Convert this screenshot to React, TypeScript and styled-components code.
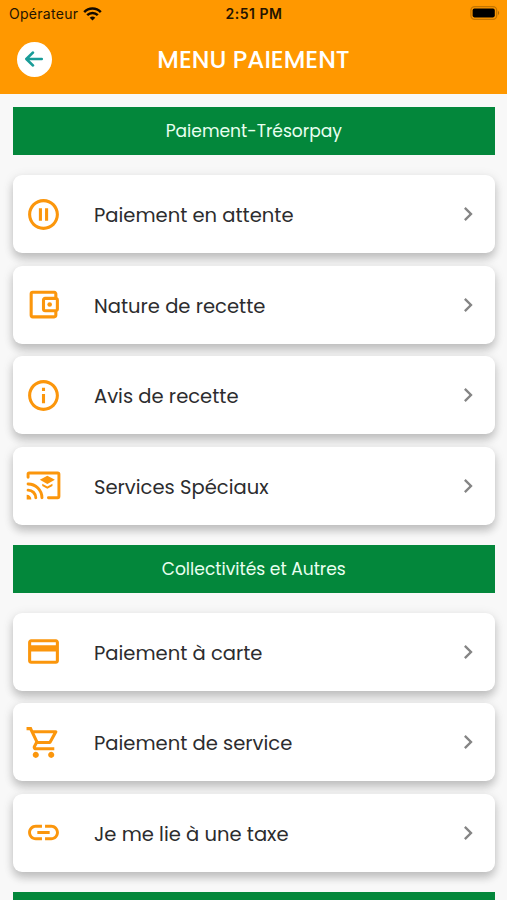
import React from 'react';
import styled, { createGlobalStyle } from 'styled-components';
import {
  MdChevronRight,
  MdInfoOutline,
  MdLink,
  MdOutlineAccountBalanceWallet,
  MdOutlineShoppingCart,
  MdPauseCircleOutline,
  MdPayment,
} from 'react-icons/md';

const GlobalStyle = createGlobalStyle`
  * { box-sizing: border-box; }
  body { margin: 0; background: #f8f8f8; }
`;

const Screen = styled.main`
  height: 900px;
  overflow: hidden;
  background: #f8f8f8;
  font-family: Poppins, Inter, sans-serif;
`;

const Header = styled.header`
  height: 93.6px;
  background: #ff9800;
`;

const StatusBar = styled.div`
  display: grid;
  grid-template-columns: 1fr auto 1fr;
  align-items: center;
  height: 27px;
  padding: 0 7px 0 9px;
  color: #241400;
  font: 400 14px Inter, sans-serif;
`;

const Carrier = styled.div`
  display: flex;
  align-items: center;
  gap: 5px;
  letter-spacing: 0.28px;
`;

const Clock = styled.div`
  margin-left: -1px;
  font-weight: 600;
  font-size: 14px;
  letter-spacing: 0.5px;
`;

const BatterySlot = styled.div`
  display: flex;
  justify-content: flex-end;
  padding-bottom: 1px;
`;

const TitleBar = styled.div`
  display: grid;
  grid-template-columns: 35px 1fr 35px;
  align-items: center;
  height: 64px;
  padding: 0 17px;
`;

const BackButton = styled.button`
  display: grid;
  place-items: center;
  width: 35px;
  height: 35px;
  padding: 0;
  border: 0;
  border-radius: 50%;
  background: #fff;
`;

const Title = styled.h1`
  margin: 0;
  padding-top: 2px;
  text-align: center;
  color: #fff;
  font-size: 24.5px;
  line-height: 36px;
  font-weight: 500;
  white-space: nowrap;
`;

const Content = styled.div`
  display: flex;
  flex-direction: column;
  gap: 20px;
  padding: 13.8px 12.5px 0 13px;
`;

const Banner = styled.h2`
  flex: none;
  height: 48px;
  margin: 0;
  background: #03873b;
  color: #e9fff0;
  text-align: center;
  font-size: 17.1px;
  line-height: 48px;
  font-weight: 400;
`;

const List = styled.div`
  display: flex;
  flex-direction: column;
  gap: 12.5px;
`;

const Card = styled.div`
  display: flex;
  align-items: center;
  height: 78px;
  padding: 0 17px 0 12px;
  border-radius: 9px;
  background: #fff;
  box-shadow: 0 6px 8px rgba(0, 0, 0, 0.18), 0 2px 12px rgba(0, 0, 0, 0.1);
`;

const IconSlot = styled.div`
  display: flex;
  width: 69px;
  color: #fb960c;
`;

const Label = styled.div`
  flex: 1;
  padding-top: 1.4px;
  color: #2c2c2e;
  font-size: 19.55px;
  line-height: 30px;
  white-space: nowrap;
`;

const Chevron = styled(MdChevronRight)`
  width: 28px;
  height: 28px;
  margin-right: -4px;
  color: #858585;
`;

interface IconProps { size?: number; }
interface Item { icon: React.ComponentType<IconProps>; label: string; }
interface Section { title: string; items: Item[]; }

const CastEducationIcon = ({ size = 24 }: IconProps) => (
  <svg width={size} height={size} viewBox="0 0 24 24" fill="none" stroke="currentColor" strokeWidth="1.9" strokeLinecap="round" strokeLinejoin="round">
    <path d="M2 6.6V4.6Q2 3.9 2.7 3.9H21.2Q22 3.9 22 4.7V19Q22 19.9 21.2 19.9H15.2" />
    <path d="M2 11A9 9 0 0 1 11 20M2 15A5 5 0 0 1 7 20" />
    <path d="M1.1 18A3 3 0 0 1 4.1 21H1.1Z" fill="currentColor" stroke="none" />
    <path d="M14.5 5.6 9.6 8.3 14.5 11 19.4 8.3Z" fill="currentColor" stroke="none" />
    <path d="M11.2 10.9V12.3L14.5 14.1 17.8 12.3V10.9L14.5 12.7Z" fill="currentColor" stroke="none" />
  </svg>
);

const sections: Section[] = [
  {
    title: 'Paiement-Trésorpay',
    items: [
      { icon: MdPauseCircleOutline, label: 'Paiement en attente' },
      { icon: MdOutlineAccountBalanceWallet, label: 'Nature de recette' },
      { icon: MdInfoOutline, label: 'Avis de recette' },
      { icon: CastEducationIcon, label: 'Services Spéciaux' },
    ],
  },
  {
    title: 'Collectivités et Autres',
    items: [
      { icon: MdPayment, label: 'Paiement à carte' },
      { icon: MdOutlineShoppingCart, label: 'Paiement de service' },
      { icon: MdLink, label: 'Je me lie à une taxe' },
    ],
  },
  { title: '', items: [] },
];

const WifiIcon = () => (
  <svg width="19" height="14" viewBox="0 0 19 14" fill="none" stroke="#120a00" strokeWidth="2.5">
    <path d="M1.2 5.1C5.8 .4 13.2 .4 17.8 5.1" />
    <path d="M4.2 8.2C7.2 5.3 11.8 5.3 14.8 8.2" />
    <path d="M9.5 13.5 6.7 10.7Q9.5 8.3 12.3 10.7Z" fill="#120a00" stroke="none" />
  </svg>
);

const BatteryIcon = () => (
  <svg width="30" height="14" viewBox="0 0 30 14">
    <rect x=".9" y=".7" width="25.8" height="12.6" rx="3.8" fill="none" stroke="#c47500" strokeWidth="1.3" />
    <rect x="2.6" y="2.6" width="22.2" height="8.8" rx="1.8" fill="#000" />
    <path d="M28 4.8Q30.4 7 28 9.2Z" fill="#b06900" />
  </svg>
);

const BackArrow = () => (
  <svg width="20" height="16" viewBox="0 0 20 16" fill="none" stroke="#199c98" strokeWidth="2.5" strokeLinecap="round" strokeLinejoin="round">
    <path d="M16.8 8H1.8M8 1.5 1.3 8 8 14.5" />
  </svg>
);

export default function App() {
  return (
    <Screen>
      <GlobalStyle />
      <Header>
        <StatusBar>
          <Carrier>Opérateur <WifiIcon /></Carrier>
          <Clock>2:51 PM</Clock>
          <BatterySlot><BatteryIcon /></BatterySlot>
        </StatusBar>
        <TitleBar>
          <BackButton aria-label="Retour"><BackArrow /></BackButton>
          <Title>MENU PAIEMENT</Title>
        </TitleBar>
      </Header>
      <Content>
        {sections.map((section) => (
          <React.Fragment key={section.title}>
            <Banner>{section.title}</Banner>
            {section.items.length > 0 && (
              <List>
                {section.items.map(({ icon: Icon, label }) => (
                  <Card key={label}>
                    <IconSlot><Icon size={37} /></IconSlot>
                    <Label>{label}</Label>
                    <Chevron />
                  </Card>
                ))}
              </List>
            )}
          </React.Fragment>
        ))}
      </Content>
    </Screen>
  );
}
